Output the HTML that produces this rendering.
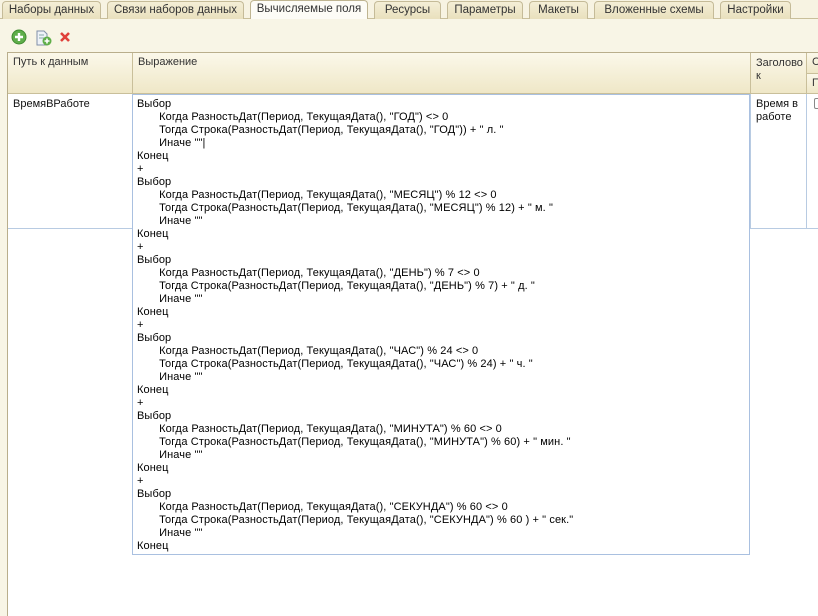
<!DOCTYPE html>
<html><head><meta charset="utf-8"><style>
*{margin:0;padding:0;box-sizing:border-box}
body{width:818px;height:616px;overflow:hidden;background:#fbf9ee;font-family:"Liberation Sans",sans-serif;font-size:11px;color:#111;position:relative}
.tabbar{position:absolute;left:0;top:0;width:818px;height:19px;border-bottom:1px solid #c9bf9a;background:#f7f3e2}
.tab{position:absolute;top:1px;height:18px;border:1px solid #c5bb98;border-bottom:none;border-radius:4px 4px 0 0;background:linear-gradient(#f4eed6,#e9e0bd);text-align:center;line-height:16px;font-size:11.5px;color:#333}
.tab.act{background:#fdfcf6;top:0;height:20px;border-color:#bfb591}
.main{position:absolute;left:0;top:19px;width:818px;height:597px;background:#f8f5e6}
.abs{position:absolute}
.grid{position:absolute;left:7px;top:52px;width:811px;height:564px;background:#fff;border-left:1px solid #b9ae8c;border-top:1px solid #b9ae8c}
.hdr{position:absolute;top:0;height:41px;background:linear-gradient(#fbf8ea,#efe7c7);border-right:1px solid #c9bf9a;border-bottom:1px solid #c9bf9a;padding:3px 5px;font-size:11px;color:#333}
.cell{position:absolute;top:41px;height:135px;border-right:1px solid #b8cbe2;border-bottom:1px solid #b8cbe2;padding:4px 5px}
.ed{position:absolute;left:132px;top:94px;width:618px;height:461px;border:1px solid #a9c0e0;background:#fff;padding:3px 0 0 4px;font-size:11px;line-height:13px;letter-spacing:0.1px;white-space:pre;color:#000}
</style></head><body>
<div class="tabbar">
<div class="tab" style="left:2px;width:99px">Наборы данных</div>
<div class="tab" style="left:107px;width:137px">Связи наборов данных</div>
<div class="tab act" style="left:250px;width:118px">Вычисляемые поля</div>
<div class="tab" style="left:374px;width:67px">Ресурсы</div>
<div class="tab" style="left:447px;width:76px">Параметры</div>
<div class="tab" style="left:529px;width:59px">Макеты</div>
<div class="tab" style="left:594px;width:120px">Вложенные схемы</div>
<div class="tab" style="left:720px;width:71px">Настройки</div>
</div>
<div class="main"></div>
<svg class="abs" style="left:11px;top:29px" width="70" height="18">
<circle cx="8" cy="8" r="7" fill="#5fae4a" stroke="#3f8a30"/><path d="M8 4v8M4 8h8" stroke="#fff" stroke-width="2.4"/>
<path d="M26 2h7l3 3v11h-10z" fill="#eef2f8" stroke="#8090a8"/><path d="M28 6h5M28 9h5" stroke="#8aa"/>
<circle cx="36" cy="12" r="4.5" fill="#5fae4a"/><path d="M36 9.5v5M33.5 12h5" stroke="#fff" stroke-width="1.6"/>
<path d="M50 4l8 8M58 4l-8 8" stroke="#e0403a" stroke-width="2.6"/>
</svg>
<div class="grid">
<div class="hdr" style="left:0;width:125px">Путь к данным</div>
<div class="hdr" style="left:125px;width:618px">Выражение</div>
<div class="hdr" style="left:743px;width:56px;line-height:13px;padding-top:4px">Заголово<br>к</div>
<div class="hdr" style="left:799px;width:20px;height:21px">С</div>
<div class="hdr" style="left:799px;top:21px;width:20px;height:20px">П</div>
<div class="cell" style="left:0;width:125px">ВремяВРаботе</div>
<div class="cell" style="left:125px;width:618px"></div>
<div class="cell" style="left:743px;width:56px;line-height:13px">Время в<br>работе</div>
<div class="cell" style="left:799px;width:20px"><div style="width:8px;height:11px;border:1px solid #888;border-radius:2px;margin-left:2px"></div></div>
</div>
<div class="ed">Выбор
       Когда РазностьДат(Период, ТекущаяДата(), "ГОД") &lt;&gt; 0
       Тогда Строка(РазностьДат(Период, ТекущаяДата(), "ГОД")) + " л. "
       Иначе ""|
Конец
+
Выбор
       Когда РазностьДат(Период, ТекущаяДата(), "МЕСЯЦ") % 12 &lt;&gt; 0
       Тогда Строка(РазностьДат(Период, ТекущаяДата(), "МЕСЯЦ") % 12) + " м. "
       Иначе ""
Конец
+
Выбор
       Когда РазностьДат(Период, ТекущаяДата(), "ДЕНЬ") % 7 &lt;&gt; 0
       Тогда Строка(РазностьДат(Период, ТекущаяДата(), "ДЕНЬ") % 7) + " д. "
       Иначе ""
Конец
+
Выбор
       Когда РазностьДат(Период, ТекущаяДата(), "ЧАС") % 24 &lt;&gt; 0
       Тогда Строка(РазностьДат(Период, ТекущаяДата(), "ЧАС") % 24) + " ч. "
       Иначе ""
Конец
+
Выбор
       Когда РазностьДат(Период, ТекущаяДата(), "МИНУТА") % 60 &lt;&gt; 0
       Тогда Строка(РазностьДат(Период, ТекущаяДата(), "МИНУТА") % 60) + " мин. "
       Иначе ""
Конец
+
Выбор
       Когда РазностьДат(Период, ТекущаяДата(), "СЕКУНДА") % 60 &lt;&gt; 0
       Тогда Строка(РазностьДат(Период, ТекущаяДата(), "СЕКУНДА") % 60 ) + " сек."
       Иначе ""
Конец</div>
</body></html>
